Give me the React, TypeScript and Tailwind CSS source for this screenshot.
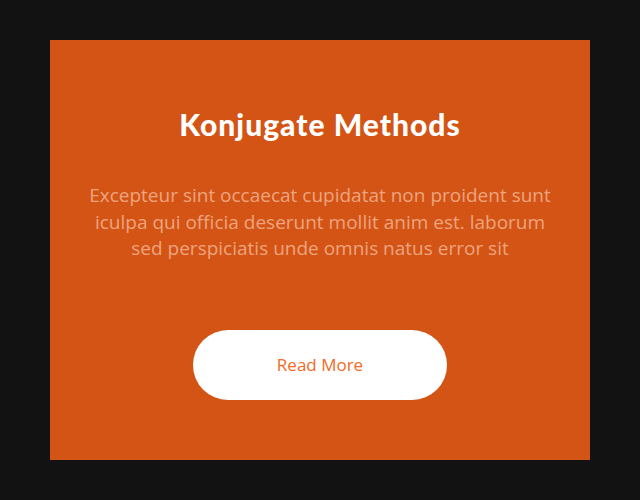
export default function App() {
  return (
    <div className="w-[640px] h-[500px] bg-[#121212] px-[50px] py-[40px]">
      <div className="w-[540px] h-[420px] bg-[#d35414] flex flex-col items-center pt-[66px] font-['Open_Sans',_'Noto_Sans',_sans-serif]">
        <h1 className="text-white text-[30px] leading-[36px] font-black tracking-[1px] font-['Lato',_sans-serif]">
          Konjugate Methods
        </h1>
        <p className="mt-[40px] text-center text-[19px] leading-[26.5px] text-[#eea47f] w-[470px]">
          Excepteur sint occaecat cupidatat non proident sunt iculpa qui officia deserunt mollit anim est. laborum sed perspiciatis unde omnis natus error sit
        </p>
        <button className="mt-[68px] w-[254px] h-[70px] rounded-full bg-white text-[#f26a26] text-[17px]">
          Read More
        </button>
      </div>
    </div>
  );
}
